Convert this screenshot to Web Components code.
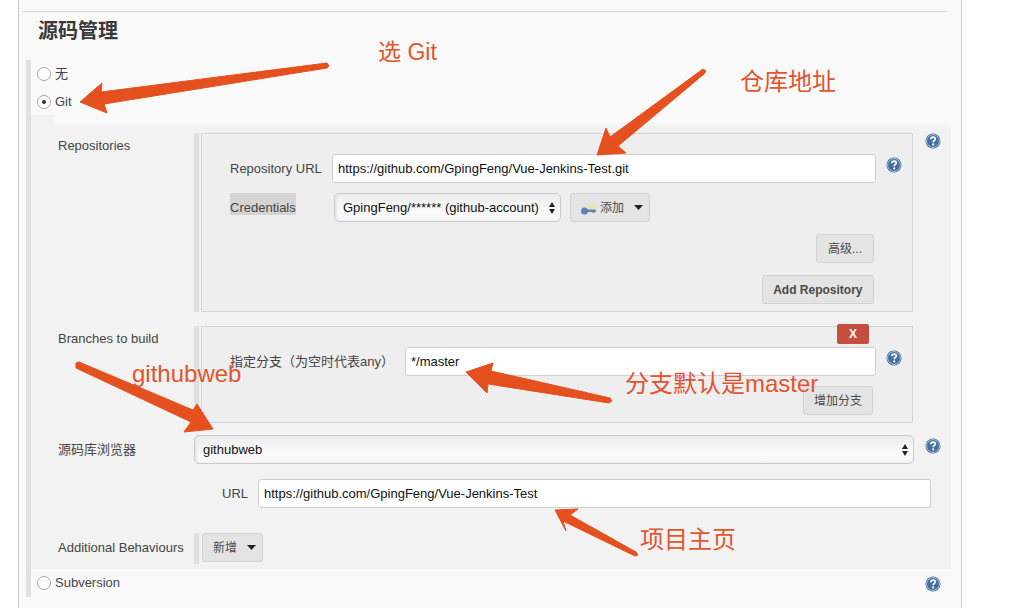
<!DOCTYPE html>
<html lang="zh">
<head>
<meta charset="utf-8">
<title>源码管理</title>
<style>
  html, body { margin: 0; height: 608px; overflow: hidden; background: #fff; }
  body { font: 13px/16px "Liberation Sans", "Noto Sans CJK SC", sans-serif; color: #444; }
</style>
</head>
<body>

<jk-page>
  <jk-heading>源码管理</jk-heading>
  <jk-radio-group>
    <jk-radio>无</jk-radio>
    <jk-radio checked>Git</jk-radio>
    <jk-nested>
      <jk-row label="Repositories" label-top="5" help="0">
        <jk-box>
          <jk-field label="Repository URL" width="102" help>
            <jk-input>https://github.com/GpingFeng/Vue-Jenkins-Test.git</jk-input>
          </jk-field>
          <jk-field label="Credentials" width="102" marked style="margin-top:10px">
            <jk-select style="width:227px;margin-left:2px">GpingFeng/****** (github-account)</jk-select>
            <jk-button caret style="margin-left:9px"><jk-key slot="icon"></jk-key>添加</jk-button>
          </jk-field>
          <jk-actions style="margin-top:12px"><jk-button style="padding:0 11px">高级...</jk-button></jk-actions>
          <jk-actions style="margin-top:12px"><jk-button strong style="padding:0 10.5px">Add Repository</jk-button></jk-actions>
        </jk-box>
      </jk-row>
      <jk-row label="Branches to build" label-top="5" style="margin-top:14px">
        <jk-box pad-bottom="7">
          <jk-close>X</jk-close>
          <jk-field label="指定分支（为空时代表any）" width="175" help>
            <jk-input>*/master</jk-input>
          </jk-field>
          <jk-actions style="margin-top:10px;margin-right:2px"><jk-button>增加分支</jk-button></jk-actions>
        </jk-box>
      </jk-row>
      <jk-row label="源码库浏览器" label-top="7" help="3" style="margin-top:12px">
        <jk-select wide>githubweb</jk-select>
      </jk-row>
      <jk-url-row label="URL" style="margin-top:15px">
        <jk-input>https://github.com/GpingFeng/Vue-Jenkins-Test</jk-input>
      </jk-url-row>
      <jk-row label="Additional Behaviours" label-top="7" style="margin-top:25px">
        <jk-bar-wrap><jk-button caret>新增</jk-button></jk-bar-wrap>
      </jk-row>
    </jk-nested>
    <jk-radio help>Subversion</jk-radio>
  </jk-radio-group>
</jk-page>

<jk-annotations>
  <jk-note x="378" y="37" size="23">选 Git</jk-note>
  <jk-note x="740" y="67">仓库地址</jk-note>
  <jk-note x="132" y="359">githubweb</jk-note>
  <jk-note x="625" y="369">分支默认是master</jk-note>
  <jk-note x="640" y="525">项目主页</jk-note>
</jk-annotations>

<script>
class ShadowBase extends HTMLElement {
  constructor() {
    super();
    this.attachShadow({mode: 'open'}).innerHTML = this.render();
  }
  render() { return '<slot></slot>'; }
}

class JkPage extends ShadowBase {
  render() {
    return `
      <style>
        :host { display: block; box-sizing: border-box; width: 944px; height: 608px; margin-left: 18px;
                padding-top: 11px; background: #f9f9f9; border: solid #cbcbcb; border-width: 0 1px; }
        hr { height: 1px; margin: 0 14px 0 4px; border: 0; background: #dcdcdc; }
      </style>
      <hr><slot></slot>`;
  }
}

class JkHeading extends ShadowBase {
  render() {
    return `
      <style>
        :host { display: block; height: 48px; box-sizing: border-box; padding: 6px 0 0 19px;
                font-size: 20px; line-height: 26px; font-weight: 700; color: #3a3a3a; }
      </style>
      <slot></slot>`;
  }
}

class JkRadioGroup extends ShadowBase {
  render() {
    return `
      <style>
        :host { display: block; width: 925px; height: 537px; margin-left: 7px; box-sizing: border-box;
                border-left: 5px solid #e0e0e0; }
      </style>
      <slot></slot>`;
  }
}

class JkRadio extends ShadowBase {
  render() {
    const dot = this.hasAttribute('checked') ? '<i></i>' : '';
    const help = this.hasAttribute('help') ? '<jk-help></jk-help>' : '';
    return `
      <style>
        :host { display: flex; align-items: center; gap: 4px; height: 28px; padding-left: 6px; color: #444; }
        .circle { display: grid; place-items: center; box-sizing: border-box; width: 14px; height: 14px;
                  border: 1px solid #a9a9a9; border-radius: 50%; background: linear-gradient(#fbfbfb, #fff); }
        i { width: 4px; height: 4px; border-radius: 50%; background: #333; }
        jk-help { margin: 2px 10px 0 auto; }
      </style>
      <span class="circle">${dot}</span><slot></slot>${help}`;
  }
}

class JkNested extends ShadowBase {
  render() {
    return `
      <style>
        :host { display: block; box-sizing: border-box; height: 454px; margin-top: -1px; padding: 18px 0 0 27px;
                background: linear-gradient(#f9f9f9 7px, #f2f2f2) 23px 0 / 100% 12px no-repeat, #f2f2f2; }
      </style>
      <slot></slot>`;
  }
}

class JkRow extends ShadowBase {
  render() {
    const top = this.getAttribute('label-top') || 0;
    const help = this.hasAttribute('help')
      ? `<jk-help style="margin-top:${this.getAttribute('help')}px"></jk-help>` : '';
    return `
      <style>
        :host { display: grid; grid-template-columns: 136px 720px 1fr; }
        .label { padding-top: ${top}px; color: #444; }
        .help { padding-left: 11px; }
      </style>
      <div class="label">${this.getAttribute('label')}</div>
      <div><slot></slot></div>
      <div class="help">${help}</div>`;
  }
}

class JkBox extends ShadowBase {
  render() {
    const bottom = this.getAttribute('pad-bottom') || 7;
    return `
      <style>
        :host { display: block; position: relative; box-sizing: border-box; margin-right: 1px;
                border-left: 5px solid #e0e0e0; }
        .inner { margin-left: 2px; padding: 20px 37px ${bottom}px 28px; background: #eeeeee;
                 border: 1px solid #d5d5d5; }
      </style>
      <div class="inner"><slot></slot></div>`;
  }
}

class JkField extends ShadowBase {
  render() {
    const marked = this.hasAttribute('marked');
    const help = this.hasAttribute('help') ? '<jk-help></jk-help>' : '';
    return `
      <style>
        :host { display: flex; align-items: center; }
        .label { flex: none; width: ${this.getAttribute('width')}px; white-space: nowrap; color: #444;
                 ${marked ? 'align-self: flex-start;' : ''} }
        .label span { display: inline-block; ${marked ? 'background: #d4d4d4; padding-top: 6px; line-height: 16px; height: 16px;' : ''} }
        .control { display: flex; flex: 1; min-width: 0; }
        jk-help { position: relative; top: -4px; margin: 0 -27px 0 10px; }
      </style>
      <div class="label"><span>${marked ? `<b>${this.getAttribute('label')}</b>` : this.getAttribute('label')}</span></div>
      <div class="control"><slot></slot></div>${help}
      <style>b { position: relative; top: 1px; font-weight: 400; }</style>`;
  }
}

class JkInput extends ShadowBase {
  render() {
    return `
      <style>
        :host { display: flex; flex: 1; align-items: center; box-sizing: border-box; height: 29px; padding: 0 5px;
                background: #fff; border: 1px solid #cfcfcf; border-radius: 3px; color: #111; white-space: nowrap; }
      </style>
      <slot></slot>`;
  }
}

class JkSelect extends ShadowBase {
  render() {
    return `
      <style>
        :host { display: flex; align-items: center; justify-content: space-between; box-sizing: border-box;
                height: 29px; padding: 0 4px 0 8px; border: 1px solid #cccccc; border-radius: 5px; color: #111;
                white-space: nowrap; background: linear-gradient(#ececec, #fafafa 65%, #f6f6f6);
                box-shadow: inset 2px 0 2px #e6e6e6; }
        svg { flex: none; }
      </style>
      <slot></slot>
      <svg width="8" height="14" viewBox="0 0 8 14"><path d="M4 1 7 6H1zM4 13 1 8h6z" fill="#222"/></svg>`;
  }
}

class JkButton extends ShadowBase {
  render() {
    const strong = this.hasAttribute('strong');
    const caret = this.hasAttribute('caret');
    const arrow = caret
      ? '<svg width="9" height="5" viewBox="0 0 9 5"><path d="M0 0h9L4.500 5z" fill="#222"/></svg>' : '';
    return `
      <style>
        :host { display: inline-flex; align-items: center; box-sizing: border-box; height: 29px;
                padding: 0 ${caret ? 6 : 10}px 0 10px; font-size: 12px;
                background: #e4e4e4; border: 1px solid #d2d2d2; border-radius: 3px; color: #4a4a4a; white-space: nowrap;
                ${strong ? 'font-weight: 700;' : ''} }
        svg { margin-left: 10px; }
      </style>
      <slot name="icon"></slot><slot></slot>${arrow}`;
  }
}

class JkKey extends ShadowBase {
  render() {
    return `
      <style>:host { display: block; width: 15px; height: 10px; margin-right: 4px; }</style>
      <svg width="15" height="10" viewBox="0 0 15 10">
        <path d="M7 2 13 0l2 2-1 2H8z" fill="#f4e68c"/>
        <circle cx="3.500" cy="6" r="3.500" fill="#5a86b8"/>
        <path d="M6 4.500h9v2.500h-1.500v1h-2V7H6z" fill="#5f8bbc"/>
      </svg>`;
  }
}

class JkActions extends ShadowBase {
  render() {
    return `
      <style>:host { display: flex; justify-content: flex-end; margin-right: 1px; }</style>
      <slot></slot>`;
  }
}

class JkClose extends ShadowBase {
  render() {
    return `
      <style>
        :host { position: absolute; top: -2px; right: 44px; display: grid; place-items: center; box-sizing: border-box;
                width: 32px; height: 20px; background: #c44f3e; border-radius: 2px; color: #fff;
                font-size: 12px; font-weight: 700; }
      </style>
      <slot></slot>`;
  }
}

class JkUrlRow extends ShadowBase {
  render() {
    return `
      <style>
        :host { display: flex; align-items: center; padding: 0 20px 0 164px; }
        .label { width: 36px; color: #444; }
      </style>
      <div class="label">${this.getAttribute('label')}</div>
      <slot></slot>`;
  }
}

class JkBarWrap extends ShadowBase {
  render() {
    return `
      <style>
        :host { display: block; height: 31px; box-sizing: border-box; padding-left: 3px;
                border-left: 5px solid #e0e0e0; }
      </style>
      <slot></slot>`;
  }
}

class JkHelp extends ShadowBase {
  render() {
    return `
      <style>:host { display: block; flex: none; width: 16px; height: 16px; }</style>
      <svg width="16" height="16" viewBox="0 0 16 16">
        <circle cx="8" cy="8" r="7.500" fill="#2f5f9a"/>
        <circle cx="8" cy="8" r="6.300" fill="none" stroke="#fff" stroke-width=".8"/>
        <circle cx="8" cy="8" r="5.700" fill="#44709f"/>
        <path d="M5.800 6.200C5.900 4.800 6.900 4.100 8.100 4.100 9.400 4.100 10.300 4.900 10.300 6 10.300 7.400 8.200 7.500 8.200 9.300" fill="none" stroke="#fff" stroke-width="1.700"/>
        <circle cx="8.200" cy="11.400" r="1.050" fill="#fff"/>
      </svg>`;
  }
}

class JkAnnotations extends ShadowBase {
  render() {
    return `
      <style>
        :host { position: absolute; left: 0; top: 0; width: 1027px; height: 608px; pointer-events: none; }
        svg { position: absolute; left: 0; top: 0; }
        polygon { fill: #e5501f; stroke: #e5501f; stroke-width: 1; stroke-linejoin: round; }
      </style>
      <svg width="1027" height="608" viewBox="0 0 1027 608">
        <polygon points="80,102 102,83 101,92 327,63 329,66 327,68 104,104 107,113"/>
        <polygon points="597,155 606,128 610,137 703,69 706,71 704,74 618,146 626,153"/>
        <polygon points="213,429 184,432 191,422 76,368 76,363 79,362 193,410 197,404"/>
        <polygon points="466,372 493,363 491,371 610,398 612,401 609,403 488,384 487,393"/>
        <polygon points="555,510 578,509 570,515 636,552 638,555 635,556 563,521 566,531"/>
      </svg>
      <slot></slot>`;
  }
}

class JkNote extends ShadowBase {
  render() {
    const size = this.getAttribute('size') || 24;
    return `
      <style>
        :host { position: absolute; left: ${this.getAttribute('x')}px; top: ${this.getAttribute('y')}px;
                font-size: ${size}px; line-height: 30px; font-weight: 400; color: #e2552f; white-space: nowrap; }
      </style>
      <slot></slot>`;
  }
}

customElements.define('jk-help', JkHelp);
customElements.define('jk-page', JkPage);
customElements.define('jk-heading', JkHeading);
customElements.define('jk-radio-group', JkRadioGroup);
customElements.define('jk-radio', JkRadio);
customElements.define('jk-nested', JkNested);
customElements.define('jk-row', JkRow);
customElements.define('jk-box', JkBox);
customElements.define('jk-field', JkField);
customElements.define('jk-input', JkInput);
customElements.define('jk-select', JkSelect);
customElements.define('jk-button', JkButton);
customElements.define('jk-key', JkKey);
customElements.define('jk-actions', JkActions);
customElements.define('jk-close', JkClose);
customElements.define('jk-url-row', JkUrlRow);
customElements.define('jk-bar-wrap', JkBarWrap);
customElements.define('jk-annotations', JkAnnotations);
customElements.define('jk-note', JkNote);
</script>
</body>
</html>
